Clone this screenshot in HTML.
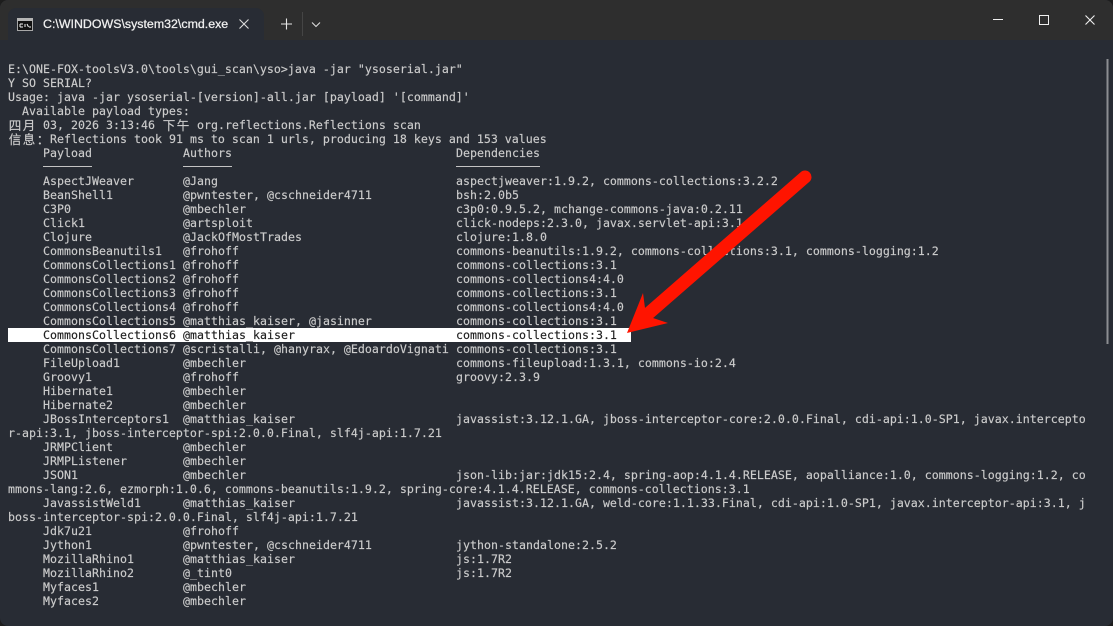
<!DOCTYPE html>
<html><head><meta charset="utf-8"><style>
html,body{margin:0;padding:0;width:1113px;height:626px;overflow:hidden;background:#1d1d1d}
#win{position:absolute;left:0;top:0;width:1113px;height:626px;background:#282c34;border-radius:8px;overflow:hidden}
#bar{position:absolute;left:0;top:0;width:1113px;height:40px;background:#2e2e2e}
#tab{position:absolute;left:8px;top:8px;width:256px;height:32px;background:#282c34;border-radius:8px 8px 0 0}
#title{position:absolute;left:43px;top:17px;font:12.4px "Liberation Sans",sans-serif;color:#f0f0f0;white-space:pre;-webkit-text-stroke:.25px #f0f0f0}
#term{position:absolute;left:8px;top:62px;font:11.6px/14px "DejaVu Sans Mono",monospace;color:#cccccc;letter-spacing:.017px;-webkit-text-stroke:.15px}
#term div{height:14px;white-space:pre}
#term i,#term b,#term u{font-style:normal;font-weight:normal;text-decoration:none;display:inline-block;white-space:pre;vertical-align:top}
#term i{margin-left:35px;width:140px}
#term b{width:273px}
.c{font-family:"Noto Sans CJK SC",sans-serif;display:inline-block;width:14px;font-size:12.5px;text-align:center;vertical-align:top}
#term .h{background:#fff;color:#1e1e1e;width:623px}
#term .s{color:transparent;-webkit-text-stroke:0}
svg{position:absolute;left:0;top:0}
</style></head><body><div id="win">
<div id="bar"></div><div id="tab"></div>
<div id="title">C:\WINDOWS\system32\cmd.exe</div>
<div id="term">
<div>E:\ONE-FOX-toolsV3.0\tools\gui_scan\yso&gt;java -jar "ysoserial.jar"</div>
<div>Y SO SERIAL?</div>
<div>Usage: java -jar ysoserial-[version]-all.jar [payload] '[command]'</div>
<div>  Available payload types:</div>
<div><span class="c">四</span><span class="c">月</span> 03, 2026 3:13:46 <span class="c">下</span><span class="c">午</span> org.reflections.Reflections scan</div>
<div><span class="c">信</span><span class="c">息</span><span class="c">：</span>Reflections took 91 ms to scan 1 urls, producing 18 keys and 153 values</div>
<div><i>Payload</i><b>Authors</b><u>Dependencies</u></div>
<div class="s"><i>-------</i><b>-------</b><u>------------</u></div>
<div><i>AspectJWeaver</i><b>@Jang</b><u>aspectjweaver:1.9.2, commons-collections:3.2.2</u></div>
<div><i>BeanShell1</i><b>@pwntester, @cschneider4711</b><u>bsh:2.0b5</u></div>
<div><i>C3P0</i><b>@mbechler</b><u>c3p0:0.9.5.2, mchange-commons-java:0.2.11</u></div>
<div><i>Click1</i><b>@artsploit</b><u>click-nodeps:2.3.0, javax.servlet-api:3.1.0</u></div>
<div><i>Clojure</i><b>@JackOfMostTrades</b><u>clojure:1.8.0</u></div>
<div><i>CommonsBeanutils1</i><b>@frohoff</b><u>commons-beanutils:1.9.2, commons-collections:3.1, commons-logging:1.2</u></div>
<div><i>CommonsCollections1</i><b>@frohoff</b><u>commons-collections:3.1</u></div>
<div><i>CommonsCollections2</i><b>@frohoff</b><u>commons-collections4:4.0</u></div>
<div><i>CommonsCollections3</i><b>@frohoff</b><u>commons-collections:3.1</u></div>
<div><i>CommonsCollections4</i><b>@frohoff</b><u>commons-collections4:4.0</u></div>
<div><i>CommonsCollections5</i><b>@matthias_kaiser, @jasinner</b><u>commons-collections:3.1</u></div>
<div class="h"><i>CommonsCollections6</i><b>@matthias_kaiser</b><u>commons-collections:3.1</u></div>
<div><i>CommonsCollections7</i><b>@scristalli, @hanyrax, @EdoardoVignati</b><u>commons-collections:3.1</u></div>
<div><i>FileUpload1</i><b>@mbechler</b><u>commons-fileupload:1.3.1, commons-io:2.4</u></div>
<div><i>Groovy1</i><b>@frohoff</b><u>groovy:2.3.9</u></div>
<div><i>Hibernate1</i><b>@mbechler</b></div>
<div><i>Hibernate2</i><b>@mbechler</b></div>
<div><i>JBossInterceptors1</i><b>@matthias_kaiser</b><u>javassist:3.12.1.GA, jboss-interceptor-core:2.0.0.Final, cdi-api:1.0-SP1, javax.intercepto</u></div>
<div>r-api:3.1, jboss-interceptor-spi:2.0.0.Final, slf4j-api:1.7.21</div>
<div><i>JRMPClient</i><b>@mbechler</b></div>
<div><i>JRMPListener</i><b>@mbechler</b></div>
<div><i>JSON1</i><b>@mbechler</b><u>json-lib:jar:jdk15:2.4, spring-aop:4.1.4.RELEASE, aopalliance:1.0, commons-logging:1.2, co</u></div>
<div>mmons-lang:2.6, ezmorph:1.0.6, commons-beanutils:1.9.2, spring-core:4.1.4.RELEASE, commons-collections:3.1</div>
<div><i>JavassistWeld1</i><b>@matthias_kaiser</b><u>javassist:3.12.1.GA, weld-core:1.1.33.Final, cdi-api:1.0-SP1, javax.interceptor-api:3.1, j</u></div>
<div>boss-interceptor-spi:2.0.0.Final, slf4j-api:1.7.21</div>
<div><i>Jdk7u21</i><b>@frohoff</b></div>
<div><i>Jython1</i><b>@pwntester, @cschneider4711</b><u>jython-standalone:2.5.2</u></div>
<div><i>MozillaRhino1</i><b>@matthias_kaiser</b><u>js:1.7R2</u></div>
<div><i>MozillaRhino2</i><b>@_tint0</b><u>js:1.7R2</u></div>
<div><i>Myfaces1</i><b>@mbechler</b></div>
<div><i>Myfaces2</i><b>@mbechler</b></div>
</div>
<svg width="1113" height="626" viewBox="0 0 1113 626">
<rect x="43" y="166" width="49" height="1" fill="#c4c4c4"/>
<rect x="183" y="166" width="49" height="1" fill="#c4c4c4"/>
<rect x="456" y="166" width="84" height="1" fill="#c4c4c4"/>
<rect x="17.5" y="18.5" width="15" height="12" fill="#111" stroke="#a8a8a8"/>
<rect x="17" y="18" width="16" height="3" fill="#b5b5b5"/>
<path d="M20 24h3M20 27h3M20 24v3M25 24v3M27 24l1.5 3M29 27h2" stroke="#f4f4f4" stroke-width="1" fill="none"/>
<path d="M239.5 19.5l9 9M248.5 19.5l-9 9" stroke="#dcdcdc" stroke-width="1.1" fill="none"/>
<path d="M281 24h11M286.5 18.500v11" stroke="#e6e6e6" stroke-width="1.1" fill="none"/>
<rect x="302" y="12" width="1" height="24" fill="#454545"/>
<path d="M312 22.500l4 4 4-4" stroke="#dcdcdc" stroke-width="1.1" fill="none"/>
<path d="M993 19.500h10" stroke="#f0f0f0" stroke-width="1" fill="none"/>
<rect x="1039.500" y="15.500" width="9" height="9" fill="none" stroke="#f0f0f0" stroke-width="1"/>
<path d="M1085.500 15.500l9 9M1094.500 15.500l-9 9" stroke="#f0f0f0" stroke-width="1.1" fill="none"/>
<rect x="1106.500" y="59" width="2" height="285" fill="#8c8e92"/>
<path d="M805 177L649 313" stroke="#ff1400" stroke-width="13" stroke-linecap="round" fill="none"/>
<path d="M627 333L643 293L645 308L653 318L668 323Z" fill="#ff1400"/>
</svg>
</div></body></html>
